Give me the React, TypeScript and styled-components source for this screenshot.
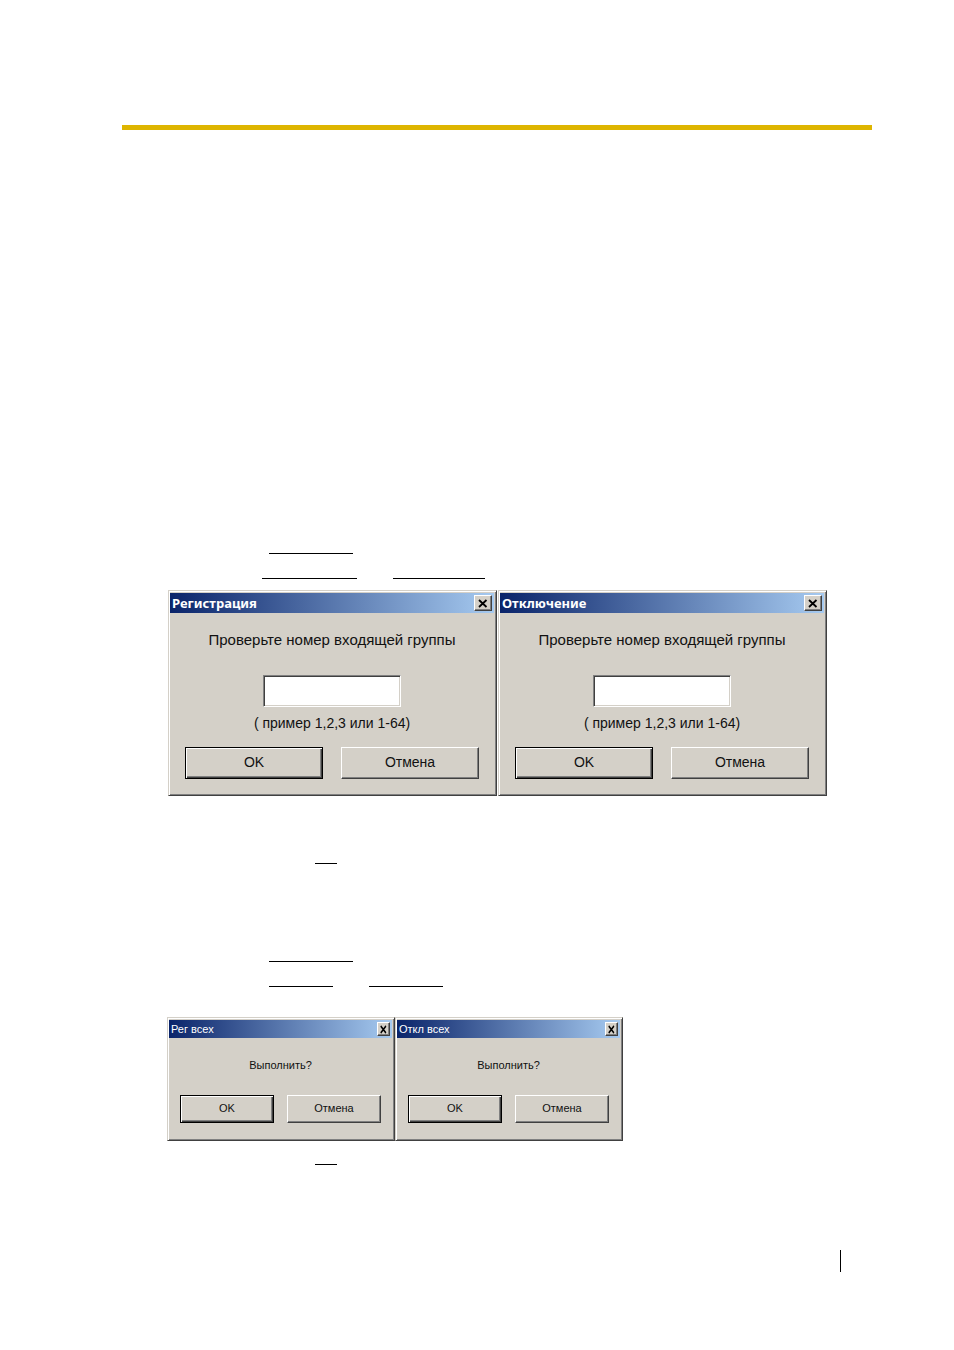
import React from "react";
import styled, { createGlobalStyle } from "styled-components";

const GlobalStyle = createGlobalStyle`
  *, *::before, *::after { box-sizing: border-box; }
  body { margin: 0; background: #fff; color: #111; }
`;

const Page = styled.main`
  padding: 125px 82px 78px 122px;
`;

const HeaderRule = styled.hr`
  height: 5px;
  margin: 0 0 423px;
  border: 0;
  background: #deb500;
`;

const BlankLine = styled.div<{ $indent: number }>`
  display: flex;
  gap: 36px;
  height: 1px;
  padding-left: ${(p) => p.$indent}px;
`;

const Blank = styled.span<{ $width: number }>`
  width: ${(p) => p.$width}px;
  background: #000;
`;

const Gap = styled.div<{ $size: number }>`
  height: ${(p) => p.$size}px;
`;

const DialogRow = styled.div<{ $indent: number; $gap?: number }>`
  display: flex;
  gap: ${(p) => p.$gap ?? 0}px;
  padding-left: ${(p) => p.$indent}px;
`;

type Size = { $small?: boolean };

const Window = styled.section<Size>`
  flex: none;
  width: ${(p) => (p.$small ? 228 : 329)}px;
  padding: ${(p) => (p.$small ? "2px 2px 17px 1px" : "2px 2px 16px 1px")};
  border: 1px solid;
  border-color: #d4d0c8 #404040 #404040 #d4d0c8;
  background: #d4d0c8;
  box-shadow: inset 1px 1px #fff, inset -1px -1px #808080;
  font-family: "Liberation Sans", Arial, sans-serif;
  font-size: ${(p) => (p.$small ? 11 : 14)}px;
`;

const TitleBar = styled.header<Size>`
  display: flex;
  align-items: center;
  justify-content: space-between;
  height: ${(p) => (p.$small ? 18 : 20)}px;
  padding: 0 2px;
  background: linear-gradient(90deg, #0a246a, #a6caf0);
`;

const Title = styled.h2<Size>`
  margin: 0;
  color: #fff;
  font-family: ${(p) =>
    p.$small
      ? '"Liberation Sans", Arial, sans-serif'
      : '"Noto Sans", Verdana, sans-serif'};
  font-size: ${(p) => (p.$small ? 11 : 13)}px;
  font-weight: ${(p) => (p.$small ? 400 : 700)};
  line-height: 18px;
`;

const CloseButton = styled.button<Size>`
  display: grid;
  place-items: center;
  width: ${(p) => (p.$small ? 13 : 18)}px;
  height: ${(p) => (p.$small ? 14 : 16)}px;
  padding: 0;
  border: 1px solid;
  border-color: #fff #404040 #404040 #fff;
  background: #d4d0c8;
  box-shadow: inset -1px -1px #808080;
`;

const Body = styled.form<Size>`
  display: flex;
  flex-direction: column;
  align-items: center;
  padding-top: ${(p) => (p.$small ? 17 : 17)}px;
`;

const Prompt = styled.label`
  font-size: 15px;
  line-height: 20px;
  white-space: nowrap;
`;

const Question = styled.p`
  margin: 0 0 20px;
  line-height: 20px;
`;

const GroupInput = styled.input`
  width: 138px;
  height: 32px;
  margin: 25px 0 6px;
  padding: 2px 6px;
  border: 1px solid;
  border-color: #808080 #fff #fff #808080;
  background: #fff;
  box-shadow: inset 1px 1px #404040, inset -1px -1px #d4d0c8;
  font: inherit;
  outline: 0;
`;

const Hint = styled.p`
  margin: 0 0 14px;
  line-height: 20px;
`;

const Actions = styled.div<Size>`
  display: flex;
  gap: ${(p) => (p.$small ? 13 : 18)}px;
`;

const Button = styled.button<Size & { $primary?: boolean }>`
  width: ${(p) => (p.$small ? 94 : 138)}px;
  height: ${(p) => (p.$small ? 28 : 32)}px;
  padding: 0 0 2px;
  border: 1px solid;
  border-color: ${(p) => (p.$primary ? "#000" : "#fff #404040 #404040 #fff")};
  background: #d4d0c8;
  box-shadow: ${(p) =>
    p.$primary
      ? "inset 1px 1px #fff, inset -1px -1px #404040, inset -2px -2px #808080"
      : "inset -1px -1px #808080"};
  color: #111;
  font: inherit;
`;

const Footer = styled.footer`
  display: flex;
  justify-content: flex-end;
  padding-right: 31px;
`;

const FooterMark = styled.span`
  width: 1px;
  height: 22px;
  background: #000;
`;

function Dialog({ id, title, small }: { id: string; title: string; small?: boolean }) {
  return (
    <Window $small={small} role="dialog" aria-labelledby={`${id}-title`}>
      <TitleBar $small={small}>
        <Title $small={small} id={`${id}-title`}>{title}</Title>
        <CloseButton $small={small} type="button" aria-label="Закрыть">
          <svg width={small ? 7 : 10} height="9" viewBox="0 0 10 9" preserveAspectRatio="none">
            <path d="M1 1L8.500 8M8.500 1L1 8" stroke="#000" strokeWidth="1.800" fill="none" />
          </svg>
        </CloseButton>
      </TitleBar>
      <Body $small={small} onSubmit={(e) => e.preventDefault()}>
        {small ? (
          <Question>Выполнить?</Question>
        ) : (
          <>
            <Prompt htmlFor={`${id}-group`}>Проверьте номер входящей группы</Prompt>
            <GroupInput id={`${id}-group`} type="text" aria-describedby={`${id}-hint`} />
            <Hint id={`${id}-hint`}>( пример 1,2,3 или 1-64)</Hint>
          </>
        )}
        <Actions $small={small}>
          <Button $small={small} $primary type="submit">OK</Button>
          <Button $small={small} type="button">Отмена</Button>
        </Actions>
      </Body>
    </Window>
  );
}

export default function App() {
  return (
    <>
      <GlobalStyle />
      <Page>
        <HeaderRule />
        <BlankLine $indent={147}><Blank $width={84} /></BlankLine>
        <Gap $size={24} />
        <BlankLine $indent={140}><Blank $width={95} /><Blank $width={92} /></BlankLine>
        <Gap $size={11} />
        <DialogRow $indent={46} $gap={1}>
          <Dialog id="register" title="Регистрация" />
          <Dialog id="disconnect" title="Отключение" />
        </DialogRow>
        <Gap $size={67} />
        <BlankLine $indent={193}><Blank $width={22} /></BlankLine>
        <Gap $size={97} />
        <BlankLine $indent={147}><Blank $width={84} /></BlankLine>
        <Gap $size={24} />
        <BlankLine $indent={147}><Blank $width={64} /><Blank $width={74} /></BlankLine>
        <Gap $size={30} />
        <DialogRow $indent={45}>
          <Dialog id="register-all" title="Рег всех" small />
          <Dialog id="disconnect-all" title="Откл всех" small />
        </DialogRow>
        <Gap $size={23} />
        <BlankLine $indent={193}><Blank $width={22} /></BlankLine>
        <Gap $size={85} />
        <Footer><FooterMark /></Footer>
      </Page>
    </>
  );
}
